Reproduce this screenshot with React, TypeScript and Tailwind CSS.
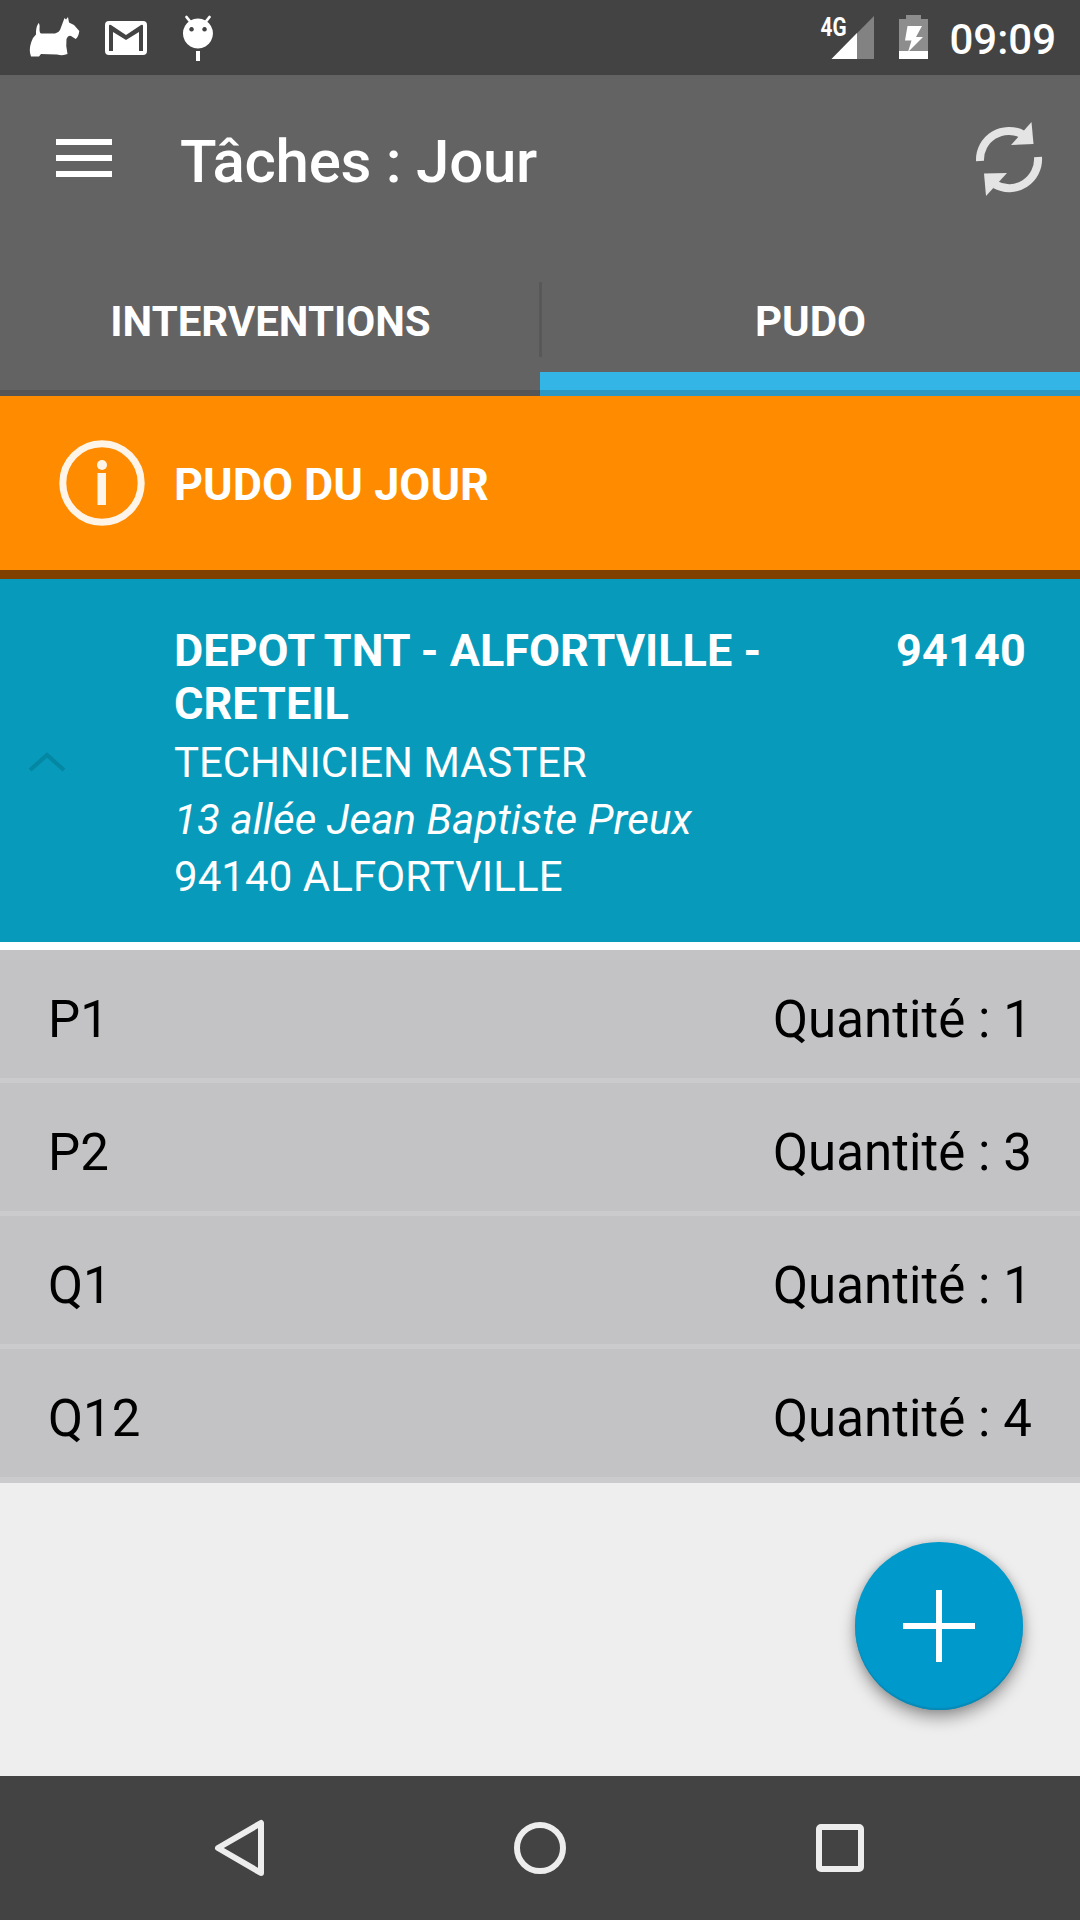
import type { ReactNode } from 'react'

type Item = { name: string; quantity: number }

const ITEMS: Item[] = [
  { name: 'P1', quantity: 1 },
  { name: 'P2', quantity: 3 },
  { name: 'Q1', quantity: 1 },
  { name: 'Q12', quantity: 4 },
]

function StatusBar() {
  return (
    <div className="flex h-[75px] shrink-0 items-center bg-[#434343]">
      <svg width="1080" height="75" viewBox="0 0 1080 75" fill="#fff" className="block">
        {/* terrier */}
        <path d="M31 56.500 Q28.500 50 31.300 42 Q33 37 36 34.500 Q35.500 28 38.500 23 Q40 24 39.500 29 Q39.500 33 41 33.500 H55 Q58.500 33 60 30 L63 22 L64.500 18 L66 19.500 L68 17 L69 22.500 L74 25 L79.300 31 Q78.500 37 75.700 39 L71 36 Q68 35 66.500 39 Q65.500 46 67.500 54 Q63 56 57 54.500 Q48 54 41 54 L39 56.500 Z" />
        {/* mail */}
        <path
          fillRule="evenodd"
          d="M109 21 H143 Q147 21 147 25 V51 Q147 55 143 55 H109 Q105 55 105 51 V25 Q105 21 109 21 Z M109 51 H113 V32 L126 40 L139 32 V51 H143 V26 Q143 24 141 25 L126 35 L111 25 Q109 24 109 26 Z"
        />
        {/* robot */}
        <path
          fillRule="evenodd"
          d="M198 18.500 A15 15 0 1 1 197.900 18.500 Z M191.500 27 A2.300 2.300 0 1 0 191.600 27 Z M204.500 27 A2.300 2.300 0 1 0 204.600 27 Z"
        />
        <path d="M186.500 17 L190.500 22 M209.500 17 L205.500 22" stroke="#fff" strokeWidth="2.800" strokeLinecap="round" />
        <rect x="196" y="51" width="4" height="10" />
        {/* signal */}
        <path d="M874 16 V59 H831.500 Z" fill="#828282" />
        <path d="M857 33 V59 H831.500 Z" />
        <text x="820.500" y="35.500" fontFamily="Roboto, sans-serif" fontSize="26" fontWeight="700" textLength="26" lengthAdjust="spacingAndGlyphs">4G</text>
        {/* battery */}
        <path d="M906 15 H921 V19 H928 V51 H899 V19 H906 Z" fill="#8d8d8d" />
        <path d="M899 51 H928 V59 H899 Z M907.500 26 H922 L916 37 H923 L908 52 L911.500 40.500 H905 Z" />
        <text x="949.500" y="54" fontFamily="Roboto, sans-serif" fontSize="42" fontWeight="500">09:09</text>
      </svg>
    </div>
  )
}

function ActionBar() {
  return (
    <header className="flex h-[168px] shrink-0 items-center pr-[36px] pl-[56px]">
      <button className="-mt-[2px] flex w-[56px] flex-col gap-[10px]">
        <span className="h-[6px] bg-white" />
        <span className="h-[6px] bg-white" />
        <span className="h-[6px] bg-white" />
      </button>
      <h1 className="ml-[68px] flex-1 pt-[5px] text-[60px] leading-[70px] font-medium tracking-[-0.25px]">Tâches : Jour</h1>
      <svg width="70" height="76" viewBox="974 121 70 76" className="block" fill="none" stroke="#e4e4e4" strokeWidth="8">
        <path d="M980 161 A29 29 0 0 1 1023 134.500" />
        <path d="M1038 157 A29 29 0 0 1 995 184.500" />
        <path d="M1031.500 122 L1033.500 144 L1011 145 Z" fill="#e4e4e4" stroke="none" />
        <path d="M984 173.500 L1007 173 L986 196 Z" fill="#e4e4e4" stroke="none" />
      </svg>
    </header>
  )
}

function Tab({ active, children }: { active?: boolean; children: ReactNode }) {
  return (
    <button className="flex flex-1 flex-col text-[42px] font-bold">
      <span className="flex h-[129px] w-full items-center justify-center pt-[28px] pl-px">{children}</span>
      <span className={active ? 'h-[18px] w-full bg-[#33b5e5]' : 'h-[18px] w-full'} />
      <span className={active ? 'h-[6px] w-full bg-[#2b98c4]' : 'h-[6px] w-full bg-[#555]'} />
    </button>
  )
}

function Depot() {
  return (
    <section className="flex h-[363px] shrink-0 bg-[#079aba]">
      <div className="flex w-[174px] items-center pt-[2px] pl-[28px]">
        <svg width="38" height="22" viewBox="0 0 38 22" fill="none" stroke="#0487a3" strokeWidth="4" className="block">
          <path d="M2 19 L19 4 L36 19" />
        </svg>
      </div>
      <div className="flex-1 pt-[45px]">
        <h2 className="w-[620px] text-[45px] leading-[53px] font-bold">DEPOT TNT - ALFORTVILLE - CRETEIL</h2>
        <div className="mt-1 text-[42px] leading-[57px]">
          <p className="tracking-[-0.13px]">TECHNICIEN MASTER</p>
          <p className="tracking-[0.14px] italic">13 allée Jean Baptiste Preux</p>
          <p className="tracking-[0.07px]">94140 ALFORTVILLE</p>
        </div>
      </div>
      <span className="pt-[45px] pr-[54px] text-[45px] leading-[53px] font-bold tracking-[0.2px]">94140</span>
    </section>
  )
}

export default function App() {
  return (
    <div className="relative flex h-[1920px] w-[1080px] flex-col overflow-hidden bg-[#eee] font-['Roboto',sans-serif] text-white">
      <StatusBar />
      <div className="shrink-0 bg-[#636363]">
        <ActionBar />
        <nav className="flex h-[153px]">
          <Tab>INTERVENTIONS</Tab>
          <span className="mt-[39px] -mr-[2px] -ml-px h-[75px] w-[3px] bg-[#585858]" />
          <Tab active>PUDO</Tab>
        </nav>
      </div>

      <div className="flex h-[183px] shrink-0 items-center border-b-[9px] border-[#7f4000] bg-[#ff8b00] pl-[59px]">
        <svg width="86" height="86" viewBox="0 0 86 86" fill="#fff4e8" className="block">
          <circle cx="43" cy="43" r="39.200" fill="none" stroke="#fff4e8" strokeWidth="7" />
          <circle cx="43" cy="25" r="5" />
          <rect x="38.500" y="33" width="8.500" height="32" />
        </svg>
        <h2 className="ml-[29px] pt-[3px] text-[45px] font-bold">PUDO DU JOUR</h2>
      </div>

      <Depot />

      <ul className="shrink-0 border-t-8 border-white text-[51px] leading-[60px] text-black">
        {ITEMS.map(item => (
          <li
            key={item.name}
            className="flex h-[133px] items-center justify-between border-b-[5px] border-[#cbcbcd] bg-[#c3c3c5] px-[48px] pt-[12px] last:h-[134px] last:border-b-[6px]"
          >
            <span>{item.name}</span>
            <span className="tracking-[0.07px]">Quantité : {item.quantity}</span>
          </li>
        ))}
      </ul>

      <button className="absolute top-[1542px] left-[855px] flex size-[168px] items-center justify-center rounded-full bg-[#09c] shadow-[0_8px_16px_rgba(0,0,0,0.35),0_0_8px_rgba(0,0,0,0.15),inset_0_-2px_1px_#0789b5]">
        <svg width="72" height="72" viewBox="0 0 72 72" fill="none" stroke="#fff" strokeWidth="6" className="block">
          <path d="M36 0 V72 M0 36 H72" />
        </svg>
      </button>

      <footer className="mt-auto flex h-[144px] shrink-0 items-center justify-between bg-[#434343] pr-[216px] pl-[213px]">
        <svg width="51" height="60" viewBox="213 1818 51 60" fill="none" stroke="#ededed" strokeWidth="6" strokeLinejoin="round" className="block">
          <path d="M261 1823 V1873 L218 1848 Z" />
        </svg>
        <span className="size-[52px] rounded-full border-[6px] border-[#ededed]" />
        <span className="size-[48px] rounded-[5px] border-[6px] border-[#ededed]" />
      </footer>
    </div>
  )
}
